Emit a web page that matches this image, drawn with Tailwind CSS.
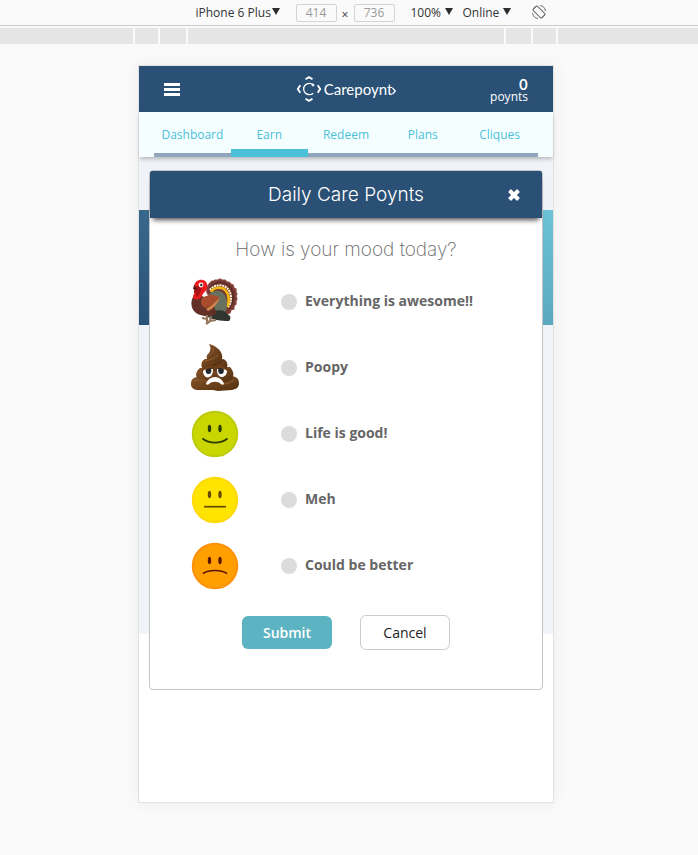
<!DOCTYPE html>
<html lang="en">
<head>
<meta charset="utf-8">
<meta name="viewport" content="width=device-width, initial-scale=1">
<title>Carepoynt – Daily Care Poynts</title>
<script src="https://cdn.jsdelivr.net/npm/@tailwindcss/browser@4"></script>
</head>
<body class="min-h-screen bg-[#fafafa] font-['Open_Sans',sans-serif]">

<!-- Device toolbar -->
<div class="flex h-[26px] items-center justify-center border-b border-[#cccccc] pl-11 text-[12px] text-[#333333]">
  <label class="flex items-center">
    <select aria-label="Device" class="w-[75px] appearance-none"><option>iPhone 6 Plus</option></select>
    <svg class="mb-0.5 ml-px h-[7px] w-2" viewBox="0 0 8 7" fill="#2d2d2d"><path d="M0 0h8L4 7z"/></svg>
  </label>
  <input aria-label="Width" value="414" class="ml-4 h-[18px] w-[41px] rounded-xs border border-[#d4d4d4] text-center text-[#9a9a9a]">
  <span class="w-[17px] pt-1 text-center leading-4">×</span>
  <input aria-label="Height" value="736" class="h-[18px] w-[41px] rounded-xs border border-[#d4d4d4] text-center text-[#9a9a9a]">
  <label class="ml-4 flex items-center">
    <select aria-label="Zoom" class="w-[31px] appearance-none"><option>100%</option></select>
    <svg class="mb-0.5 ml-[3px] h-[7px] w-2" viewBox="0 0 8 7" fill="#2d2d2d"><path d="M0 0h8L4 7z"/></svg>
  </label>
  <label class="ml-2.5 flex items-center">
    <select aria-label="Network" class="w-[37px] appearance-none"><option>Online</option></select>
    <svg class="mb-0.5 ml-[3px] h-[7px] w-2" viewBox="0 0 8 7" fill="#2d2d2d"><path d="M0 0h8L4 7z"/></svg>
  </label>
  <button aria-label="Rotate" class="ml-5 pb-0.5">
    <svg class="h-4 w-4" viewBox="0 0 16 16" fill="none" stroke="#6e6e6e"><rect x="5" y="2" width="6" height="12" rx="1" transform="rotate(-45 8 8)"/><path d="M1.500 9A6.500 6.500 0 0 0 7 14.500M14.500 7A6.500 6.500 0 0 0 9 1.500M2 5.500A6.500 6.500 0 0 1 5.500 2M14 10.500A6.500 6.500 0 0 1 10.500 14"/></svg>
  </button>
</div>

<!-- Breakpoint ruler -->
<div class="mt-0.5 flex h-4 gap-0.5">
  <div class="grow basis-0 bg-[#e5e5e5]"></div>
  <div class="w-[23px] bg-[#e5e5e5]"></div>
  <div class="w-[26px] bg-[#e5e5e5]"></div>
  <div class="w-[316px] bg-[#e5e5e5]"></div>
  <div class="w-[25px] bg-[#e5e5e5]"></div>
  <div class="w-[23px] bg-[#e5e5e5]"></div>
  <div class="grow basis-2 bg-[#e5e5e5]"></div>
</div>

<!-- Phone viewport -->
<div class="pr-1.5">
<div class="mx-auto mt-[21px] max-w-[416px] border border-[#e2e2e2] bg-white pb-[168px] shadow-[0_0_16px_rgba(0,0,0,0.06)]">
  <header class="grid h-[46px] grid-cols-3 items-center bg-[#2a5076] text-white">
    <button aria-label="Menu" class="ml-[25px] flex w-4 flex-col gap-[2px]">
      <span class="h-[3px] w-4 bg-white"></span><span class="h-[3px] w-4 bg-white"></span><span class="h-[3px] w-4 bg-white"></span>
    </button>
    <a href="#" class="flex items-center justify-center">
      <svg class="h-7 w-[26px] shrink-0" viewBox="0 0 26 28" fill="none" stroke="#fff"><path stroke-width="1.900" d="M4.300 10.300 1.800 14l2.500 3.700M21.700 10.300l2.500 3.700-2.500 3.700M9.500 4.300 13 2.200l3.500 2.100M9.500 23.700 13 25.800l3.500-2.100"/><path stroke-width="1.300" d="M17.200 9.800A5.700 5.700 0 1 0 17.200 18.200"/><circle cx="17" cy="10" r="1" fill="#fff"/></svg>
      <span class="ml-0.5 font-['Lato',sans-serif] text-[15px] leading-6">Carepoynt</span>
      <svg class="mt-1 h-2 w-1 shrink-0" viewBox="0 0 4 8" fill="none" stroke="#fff" stroke-width="1.200"><path d="M.5 1 3.300 4 .5 7"/></svg>
    </a>
    <div class="flex flex-col items-end pr-[25px] pt-1 text-[12px] font-medium">
      <span class="font-['Inter',sans-serif] text-[14px] font-semibold leading-3">0</span>
      <span class="leading-3">poynts</span>
    </div>
  </header>

  <nav class="relative z-10 bg-[#f5feff] px-[15px] shadow-[0_3px_4px_-1px_rgba(0,0,0,0.25)]">
    <div class="grid grid-cols-5 text-center text-[12px] leading-[45px] text-[#4ac1d9]">
      <a href="#" class="h-[45px] border-b-4 border-[#91a6bc]">Dashboard</a>
      <a href="#" class="h-[45px] border-b-8 border-[#4ac1d9]">Earn</a>
      <a href="#" class="h-[45px] border-b-4 border-[#91a6bc]">Redeem</a>
      <a href="#" class="h-[45px] border-b-4 border-[#91a6bc]">Plans</a>
      <a href="#" class="h-[45px] border-b-4 border-[#91a6bc]">Cliques</a>
    </div>
  </nav>

  <main class="relative bg-[#f0f4f8] pt-[53px] pb-[309px]">
    <div class="h-[115px] bg-linear-45 from-[#2a5076] to-[#6bc4d6]"></div>

    <section role="dialog" aria-labelledby="dialog-title" class="absolute inset-x-2.5 top-[13px] z-20 rounded border border-[#c4c4c4] bg-white pb-[39px]">
      <div class="relative flex h-[47px] items-center justify-center rounded-t-xs bg-[#2a5076] text-white shadow-[0_5px_5px_-3px_rgba(0,0,0,0.7)]">
        <h1 id="dialog-title" class="font-['Inter',sans-serif] text-[19px] font-light leading-[26px]">Daily Care Poynts</h1>
        <button aria-label="Close" class="absolute right-[22px] top-[18px]">
          <svg class="h-3 w-3" viewBox="0 0 12 12" stroke="#fff" stroke-width="4"><path d="M1.500 1.500l9 9M10.500 1.500l-9 9"/></svg>
        </button>
      </div>
      <form>
        <fieldset>
          <legend class="w-full pt-[19px] text-center font-['Inter',sans-serif] text-[19px] font-extralight leading-[26px] text-[#666666]">How is your mood today?</legend>
          <div class="mt-[6px] pl-[41px]">
            <div class="flex h-[66px] items-center">
              <svg class="h-12 w-12" viewBox="0 0 48 48">
                <path fill="#753a33" stroke="#8f4a42" stroke-width="1.200" d="M16 15c-1-5 1-8 3-10l2-2 2 0 1-1 3 0 2-1 2 1 3 0 2 2 2 0 2 2 2 1 1 3 2 1 0 3 1 2-1 2 1 3-1 2 0 3-2 2 0 3-3 1-1 3-4 1-4-1z"/>
                <path fill="none" stroke="#5b2925" stroke-width="1.500" d="M20 9c5-6 15-6 20 1 3 6 3 14-2 21"/>
                <path fill="none" stroke="#fff6d8" stroke-width="2" stroke-dasharray="2 .7" d="M19 12c4-6 14-6 18-1 4 5 4 14 0 18"/>
                <path fill="none" stroke="#f2b713" stroke-width="2.600" d="M20 14c3-5 12-6 15-1 4 5 3 12 1 16"/>
                <path fill="#68715f" d="M16 22c2-8 10-12 16-7 5 5 5 14 2 20l-14 2z"/>
                <path fill="#30362f" d="M13 34c9 0 15-3 20-1l6 5c1 2 0 4-1 5-8 0-17-1-23-5z"/>
                <path fill="#633027" d="M4 16c-5 6-5 14 1 19 7 4 14 4 20 1 0-8-6-14-14-18z"/>
                <path fill="#a74d2e" d="M11 20c6-4 13-4 18 0-4 3-8 8-14 10-5-1-6-6-4-10z"/>
                <path fill="#d4874a" d="M15 31c6-3 9-7 14-11-3 6-7 11-12 13z"/>
                <path fill="#ed1c1c" d="M3 8C4 3 8 1 12 2c4 1 5 5 4 9-2 3-4 4-5 7-2 3-5 4-8 3l-1-3c1-3 3-3 2-6z"/>
                <path fill="#ad1418" d="M3 8c3-1 6 1 8 3l-4 8c-2 0-3-2-2-4l-2 0z"/>
                <path fill="#5b1c19" d="M3 7 2 11l5 1z"/>
                <circle cx="10" cy="7" r="2.400" fill="#fff"/><circle cx="10.300" cy="7" r="1.200" fill="#30211f"/>
                <path fill="none" stroke="#94765e" stroke-width="2.200" d="M16 37v4l-5-1M16 41v3M20 38l-1 5 6-1M19 43l-4 3"/>
              </svg>
              <input type="radio" name="mood" id="awesome" class="ml-[42px] h-4 w-4 appearance-none rounded-full bg-[#dcdcdc] checked:bg-[#5cb3c1]">
              <label for="awesome" class="pb-1 pl-2 text-[14px] font-bold text-[#666666]">Everything is awesome!!</label>
            </div>
            <div class="flex h-[66px] items-center">
              <svg class="h-12 w-12" viewBox="0 0 48 48">
                <defs><linearGradient id="brown" x2="1" y2="1"><stop stop-color="#885329"/><stop offset="1" stop-color="#51300f"/></linearGradient></defs>
                <path fill="url(#brown)" d="M7 33c-5 0-7 3-7 7 0 4 3 6 8 6l14 0 5 1 14-1c5-1 7-3 7-7 0-5-4-7-8-7z"/>
                <path fill="url(#brown)" d="M9 24c-5 4-5 9-1 12 8 3 24 3 31 0 5-4 4-8 0-13z"/>
                <path fill="url(#brown)" d="M14 15c-4 2-5 7-1 11 6 2 17 1 22-1 3-4 1-9-3-10z"/>
                <path fill="url(#brown)" d="M18 0c7 2 12 6 13 11 1 4-1 6-4 8-4 3-10 3-15 7-3-5 0-9 4-11-1-3 0-4 2-6 2-3 2-6 0-9z"/>
                <path fill="none" stroke="#8f5d31" d="M17 11c4-1 6-3 5-7M14 17c6-1 10-3 13-6M3 37c5-2 10-1 14 1M31 40c5 0 8-1 12-4"/>
                <path fill="none" stroke="#4b290d" d="M15 24c7-3 14-4 17-8"/>
                <path fill="#fff" d="M12 27c0 8 9 9 10 0v-2l-9 0zM26 27c1 9 10 7 10 0l-1-2-9 0z"/>
                <ellipse cx="17.500" cy="26.500" rx="2.800" ry="3.600" fill="#23262a"/><ellipse cx="30" cy="26.500" rx="2.800" ry="3.600" fill="#23262a"/>
                <path fill="#6f411b" d="M10 28c1-4 5-6 11-7l1 3c-4 0-8 1-12 4zM27 21c5 0 9 3 11 7-4-3-8-4-12-4z"/>
                <path fill="#fff" d="M15 40c1-4 5-7 9-7s8 3 9 7c-1 1-2 1-3 0-3-3-9-3-12 0-1 1-2 1-3 0z"/>
              </svg>
              <input type="radio" name="mood" id="poopy" class="ml-[42px] h-4 w-4 appearance-none rounded-full bg-[#dcdcdc] checked:bg-[#5cb3c1]">
              <label for="poopy" class="pb-1 pl-2 text-[14px] font-bold text-[#666666]">Poopy</label>
            </div>
            <div class="flex h-[66px] items-center">
              <svg class="h-12 w-12" viewBox="0 0 48 48"><circle cx="24" cy="24" r="22.200" fill="#cad600" stroke="#bccb0b" stroke-width="2"/><ellipse cx="18.500" cy="18.500" rx="1.700" ry="3.800" fill="#2c3c05"/><ellipse cx="29" cy="18.500" rx="1.700" ry="3.800" fill="#2c3c05"/><path d="M11.500 28.500c7 5.500 18 5.500 25 0" fill="none" stroke="#2c3c05" stroke-width="1.700"/></svg>
              <input type="radio" name="mood" id="good" class="ml-[42px] h-4 w-4 appearance-none rounded-full bg-[#dcdcdc] checked:bg-[#5cb3c1]">
              <label for="good" class="pb-1 pl-2 text-[14px] font-bold text-[#666666]">Life is good!</label>
            </div>
            <div class="flex h-[66px] items-center">
              <svg class="h-12 w-12" viewBox="0 0 48 48"><circle cx="24" cy="24" r="22.200" fill="#ffe400" stroke="#ffd80a" stroke-width="2"/><ellipse cx="18.500" cy="18.500" rx="1.700" ry="3.800" fill="#654a00"/><ellipse cx="29" cy="18.500" rx="1.700" ry="3.800" fill="#654a00"/><path d="M13 30.700h22" stroke="#654a00" stroke-width="1.700"/></svg>
              <input type="radio" name="mood" id="meh" class="ml-[42px] h-4 w-4 appearance-none rounded-full bg-[#dcdcdc] checked:bg-[#5cb3c1]">
              <label for="meh" class="pb-1 pl-2 text-[14px] font-bold text-[#666666]">Meh</label>
            </div>
            <div class="flex h-[66px] items-center">
              <svg class="h-12 w-12" viewBox="0 0 48 48"><circle cx="24" cy="24" r="22.200" fill="#ff9f00" stroke="#ff9108" stroke-width="2"/><ellipse cx="18.500" cy="18.500" rx="1.700" ry="3.800" fill="#5a1500"/><ellipse cx="29" cy="18.500" rx="1.700" ry="3.800" fill="#5a1500"/><path d="M12 31.500c6-4 18-4 24 0" fill="none" stroke="#5a1500" stroke-width="1.700"/></svg>
              <input type="radio" name="mood" id="better" class="ml-[42px] h-4 w-4 appearance-none rounded-full bg-[#dcdcdc] checked:bg-[#5cb3c1]">
              <label for="better" class="pb-1 pl-2 text-[14px] font-bold text-[#666666]">Could be better</label>
            </div>
          </div>
        </fieldset>
        <div class="mt-4 flex items-center justify-center gap-7">
          <button type="submit" class="h-[33px] w-[90px] rounded-md bg-[#5cb3c1] text-[14px] font-semibold text-white">Submit</button>
          <button type="button" class="h-[35px] w-[90px] rounded-md border border-[#cccccc] bg-white text-[14px] text-[#222222]">Cancel</button>
        </div>
      </form>
    </section>
  </main>
</div>
</div>
</body>
</html>
